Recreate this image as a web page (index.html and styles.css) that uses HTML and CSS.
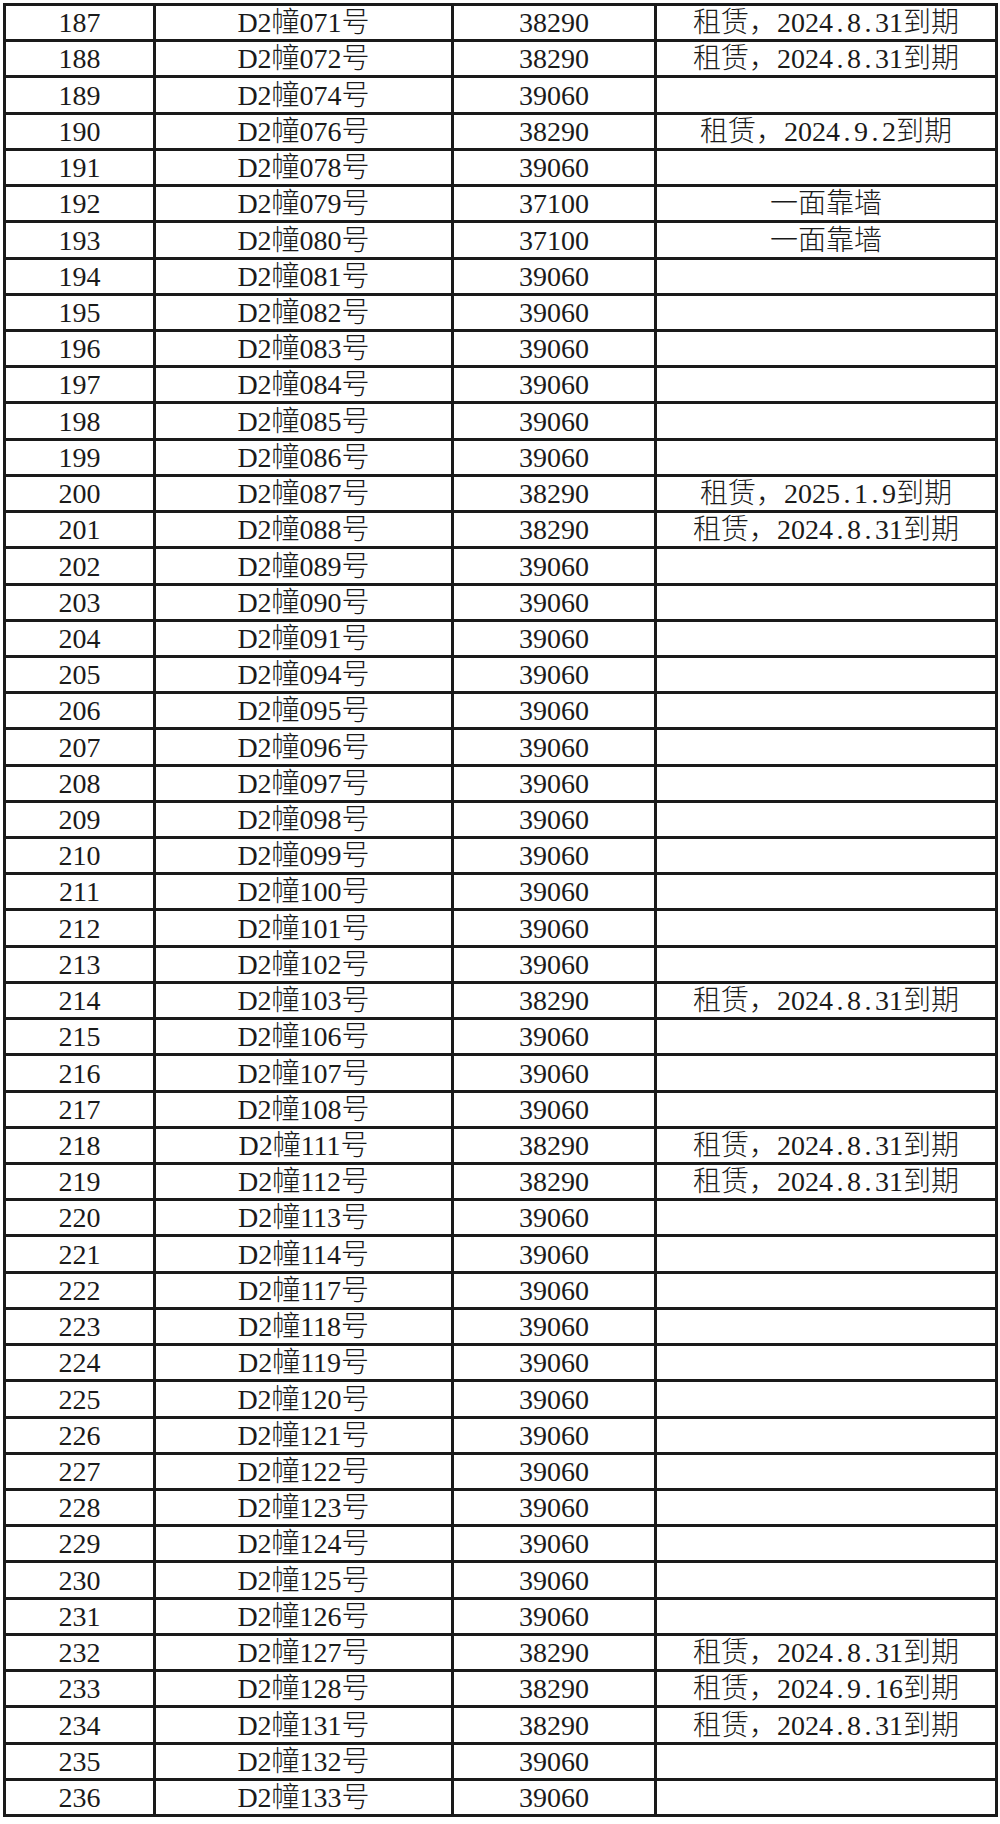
FILE: index.html
```html
<!DOCTYPE html>
<html lang="zh-CN">
<head>
<meta charset="utf-8">
<title>D2幢</title>
<link rel="stylesheet" href="styles.css">
</head>
<body>
<table class="sheet">
<colgroup><col class="c-no"><col class="c-room"><col class="c-price"><col class="c-note"></colgroup>
<tbody>
<tr><td>187</td><td>D2幢071号</td><td>38290</td><td>租赁，2024<span class="dot">.</span>8<span class="dot">.</span>31到期</td></tr>
<tr><td>188</td><td>D2幢072号</td><td>38290</td><td>租赁，2024<span class="dot">.</span>8<span class="dot">.</span>31到期</td></tr>
<tr><td>189</td><td>D2幢074号</td><td>39060</td><td></td></tr>
<tr><td>190</td><td>D2幢076号</td><td>38290</td><td>租赁，2024<span class="dot">.</span>9<span class="dot">.</span>2到期</td></tr>
<tr><td>191</td><td>D2幢078号</td><td>39060</td><td></td></tr>
<tr><td>192</td><td>D2幢079号</td><td>37100</td><td>一面靠墙</td></tr>
<tr><td>193</td><td>D2幢080号</td><td>37100</td><td>一面靠墙</td></tr>
<tr><td>194</td><td>D2幢081号</td><td>39060</td><td></td></tr>
<tr><td>195</td><td>D2幢082号</td><td>39060</td><td></td></tr>
<tr><td>196</td><td>D2幢083号</td><td>39060</td><td></td></tr>
<tr><td>197</td><td>D2幢084号</td><td>39060</td><td></td></tr>
<tr><td>198</td><td>D2幢085号</td><td>39060</td><td></td></tr>
<tr><td>199</td><td>D2幢086号</td><td>39060</td><td></td></tr>
<tr><td>200</td><td>D2幢087号</td><td>38290</td><td>租赁，2025<span class="dot">.</span>1<span class="dot">.</span>9到期</td></tr>
<tr><td>201</td><td>D2幢088号</td><td>38290</td><td>租赁，2024<span class="dot">.</span>8<span class="dot">.</span>31到期</td></tr>
<tr><td>202</td><td>D2幢089号</td><td>39060</td><td></td></tr>
<tr><td>203</td><td>D2幢090号</td><td>39060</td><td></td></tr>
<tr><td>204</td><td>D2幢091号</td><td>39060</td><td></td></tr>
<tr><td>205</td><td>D2幢094号</td><td>39060</td><td></td></tr>
<tr><td>206</td><td>D2幢095号</td><td>39060</td><td></td></tr>
<tr><td>207</td><td>D2幢096号</td><td>39060</td><td></td></tr>
<tr><td>208</td><td>D2幢097号</td><td>39060</td><td></td></tr>
<tr><td>209</td><td>D2幢098号</td><td>39060</td><td></td></tr>
<tr><td>210</td><td>D2幢099号</td><td>39060</td><td></td></tr>
<tr><td>211</td><td>D2幢100号</td><td>39060</td><td></td></tr>
<tr><td>212</td><td>D2幢101号</td><td>39060</td><td></td></tr>
<tr><td>213</td><td>D2幢102号</td><td>39060</td><td></td></tr>
<tr><td>214</td><td>D2幢103号</td><td>38290</td><td>租赁，2024<span class="dot">.</span>8<span class="dot">.</span>31到期</td></tr>
<tr><td>215</td><td>D2幢106号</td><td>39060</td><td></td></tr>
<tr><td>216</td><td>D2幢107号</td><td>39060</td><td></td></tr>
<tr><td>217</td><td>D2幢108号</td><td>39060</td><td></td></tr>
<tr><td>218</td><td>D2幢111号</td><td>38290</td><td>租赁，2024<span class="dot">.</span>8<span class="dot">.</span>31到期</td></tr>
<tr><td>219</td><td>D2幢112号</td><td>38290</td><td>租赁，2024<span class="dot">.</span>8<span class="dot">.</span>31到期</td></tr>
<tr><td>220</td><td>D2幢113号</td><td>39060</td><td></td></tr>
<tr><td>221</td><td>D2幢114号</td><td>39060</td><td></td></tr>
<tr><td>222</td><td>D2幢117号</td><td>39060</td><td></td></tr>
<tr><td>223</td><td>D2幢118号</td><td>39060</td><td></td></tr>
<tr><td>224</td><td>D2幢119号</td><td>39060</td><td></td></tr>
<tr><td>225</td><td>D2幢120号</td><td>39060</td><td></td></tr>
<tr><td>226</td><td>D2幢121号</td><td>39060</td><td></td></tr>
<tr><td>227</td><td>D2幢122号</td><td>39060</td><td></td></tr>
<tr><td>228</td><td>D2幢123号</td><td>39060</td><td></td></tr>
<tr><td>229</td><td>D2幢124号</td><td>39060</td><td></td></tr>
<tr><td>230</td><td>D2幢125号</td><td>39060</td><td></td></tr>
<tr><td>231</td><td>D2幢126号</td><td>39060</td><td></td></tr>
<tr><td>232</td><td>D2幢127号</td><td>38290</td><td>租赁，2024<span class="dot">.</span>8<span class="dot">.</span>31到期</td></tr>
<tr><td>233</td><td>D2幢128号</td><td>38290</td><td>租赁，2024<span class="dot">.</span>9<span class="dot">.</span>16到期</td></tr>
<tr><td>234</td><td>D2幢131号</td><td>38290</td><td>租赁，2024<span class="dot">.</span>8<span class="dot">.</span>31到期</td></tr>
<tr><td>235</td><td>D2幢132号</td><td>39060</td><td></td></tr>
<tr><td>236</td><td>D2幢133号</td><td>39060</td><td></td></tr>
</tbody>
</table>
</body>
</html>
```

FILE: styles.css
```css
html, body {
  margin: 0;
  padding: 0;
  background: #ffffff;
}

body {
  padding: 3px 0 0 3px;
  font-family: "Liberation Serif", "Noto Sans CJK SC", serif;
  font-weight: 300;
  color: #1a1a1a;
}

.sheet {
  border-collapse: collapse;
  table-layout: fixed;
  width: 992px;
  border: 3px solid #1a1a1a;
}

.c-no { width: 150px; }
.c-room { width: 298px; }
.c-price { width: 203px; }
.c-note { width: 341px; }

.sheet td {
  border: 3px solid #1a1a1a;
  height: 36.22px;
  padding: 0 0 1px 0;
  box-sizing: border-box;
  text-align: center;
  vertical-align: bottom;
  font-size: 28px;
  line-height: 30px;
  white-space: nowrap;
}

.dot {
  display: inline-block;
  width: 0.5em;
  text-align: center;
}
```
